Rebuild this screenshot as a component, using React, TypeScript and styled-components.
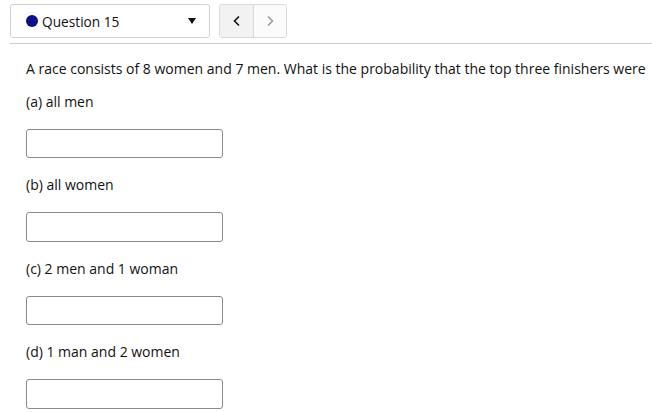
import React from "react";
import styled, { createGlobalStyle } from "styled-components";

const Global = createGlobalStyle`
  html, body { margin: 0; padding: 0; background: #fff; }
  body { font-family: "Open Sans", "Lato", sans-serif; color: #111; }
  * { box-sizing: border-box; }
`;

const Page = styled.div`
  width: 652px;
  height: 412px;
  overflow: hidden;
  padding: 4px 0 0 10px;
`;

const Toolbar = styled.div`
  display: flex;
  align-items: center;
  gap: 9px;
  height: 34px;
`;

const Select = styled.div`
  width: 200px;
  height: 34px;
  border: 1px solid #d2d2d2;
  border-radius: 3px;
  display: flex;
  align-items: center;
  padding: 0 8px 0 15px;
  font-size: 13.7px;
  color: #111;
`;

const Dot = styled.span`
  width: 12px;
  height: 12px;
  border-radius: 50%;
  background: #0b0f8a;
  margin-right: 4px;
  flex: none;
`;

const SelectLabel = styled.span`
  flex: 1;
`;

const Caret = styled.span`
  width: 0;
  height: 0;
  border-left: 4px solid transparent;
  border-right: 4px solid transparent;
  border-top: 6px solid #111;
  margin-right: 5px;
`;

const NavGroup = styled.div`
  display: flex;
  height: 34px;
  border: 1px solid #dadada;
  border-radius: 3px;
  overflow: hidden;
`;

const NavButton = styled.button<{ $active?: boolean }>`
  width: 33px;
  height: 100%;
  border: none;
  padding: 0;
  margin: 0;
  background: ${(p) => (p.$active ? "#f2f2f2" : "#fbfbfb")};
  color: ${(p) => (p.$active ? "#111" : "#999")};
  display: flex;
  align-items: center;
  justify-content: center;
  & + & { border-left: 1px solid #dadada; }
`;

const Rule = styled.div`
  height: 1px;
  background: #cfcfcf;
  margin-top: 5px;
`;

const Content = styled.div`
  padding: 16px 0 0 16px;
  font-size: 14px;
  color: #111;
  white-space: nowrap;
`;

const Prompt = styled.div`
  line-height: 18px;
  margin-bottom: 15px;
`;

const Part = styled.div`
  display: flex;
  flex-direction: column;
  margin-bottom: 18px;
`;

const PartLabel = styled.div`
  line-height: 18px;
  margin-bottom: 18px;
`;

const Answer = styled.input`
  width: 197px;
  height: 29.4px;
  border: 1px solid #8a8a8a;
  border-radius: 3px;
  margin: 0;
  background: #fff;
`;

const Chevron = ({ dir }: { dir: "left" | "right" }) => (
  <svg width="10" height="12" viewBox="0 0 10 12">
    <path
      d={dir === "left" ? "M7 1.5 L2.5 6 L7 10.5" : "M3 1.5 L7.5 6 L3 10.5"}
      fill="none"
      stroke="currentColor"
      strokeWidth="1.6"
    />
  </svg>
);

const parts = ["(a) all men", "(b) all women", "(c) 2 men and 1 woman", "(d) 1 man and 2 women"];

export default function App() {
  return (
    <Page>
      <Global />
      <Toolbar>
        <Select>
          <Dot />
          <SelectLabel>Question 15</SelectLabel>
          <Caret />
        </Select>
        <NavGroup>
          <NavButton $active>
            <Chevron dir="left" />
          </NavButton>
          <NavButton>
            <Chevron dir="right" />
          </NavButton>
        </NavGroup>
      </Toolbar>
      <Rule />
      <Content>
        <Prompt>A race consists of 8 women and 7 men. What is the probability that the top three finishers were</Prompt>
        {parts.map((p) => (
          <Part key={p}>
            <PartLabel>{p}</PartLabel>
            <Answer type="text" />
          </Part>
        ))}
      </Content>
    </Page>
  );
}
